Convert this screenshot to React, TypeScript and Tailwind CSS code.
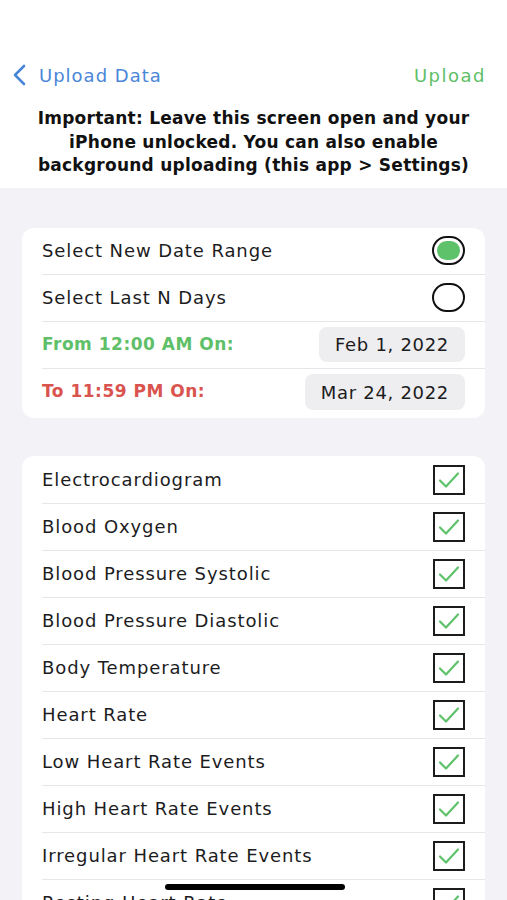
const items = [
  "Electrocardiogram",
  "Blood Oxygen",
  "Blood Pressure Systolic",
  "Blood Pressure Diastolic",
  "Body Temperature",
  "Heart Rate",
  "Low Heart Rate Events",
  "High Heart Rate Events",
  "Irregular Heart Rate Events",
  "Resting Heart Rate",
];

const Check = () => (
  <div className="w-[32px] h-[30px] border-2 border-[#1c1c1c] flex items-center justify-center">
    <svg width="24" height="20" viewBox="0 0 24 20" fill="none">
      <path d="M3 10.5 L9 16.5 L21 3.5" stroke="#5ec26a" strokeWidth="2.2" strokeLinecap="round" strokeLinejoin="round" />
    </svg>
  </div>
);

const Row = ({ children, last }: { children: React.ReactNode; last?: boolean }) => (
  <div className="pl-[20px]">
    <div className={"h-[47px] flex items-center justify-between pr-[20px] " + (last ? "" : "border-b border-[#e5e5ea]")}>
      {children}
    </div>
  </div>
);

export default function App() {
  return (
    <div
      className="relative w-[507px] h-[900px] overflow-hidden bg-[#f2f2f7] text-[#1c1c1e]"
      style={{ fontFamily: '"DejaVu Sans", "Liberation Sans", sans-serif' }}
    >
      <div className="bg-white pt-[60px] pb-[10px]">
        <div className="flex items-center justify-between px-[12px] h-[30px]">
          <div className="flex items-center gap-[11px] text-[#4a86d8]">
            <svg width="16" height="22" viewBox="0 0 16 22" fill="none">
              <path d="M12 2 L3 11 L12 20" stroke="#4a86d8" strokeWidth="2.6" strokeLinecap="round" strokeLinejoin="round" />
            </svg>
            <span className="text-[18px] tracking-[1px]">Upload Data</span>
          </div>
          <span className="text-[18px] text-[#5fbf68] pr-[9px] tracking-[1.5px]">Upload</span>
        </div>
        <p className="mt-[17px] text-center text-[17px] leading-[23.5px] font-bold text-[#111] tracking-[0.25px] whitespace-nowrap">
          Important: Leave this screen open and your
          <br />
          iPhone unlocked. You can also enable
          <br />
          background uploading (this app &gt; Settings)
        </p>
      </div>

      <div className="px-[22px] pt-[40px]">
        <div className="bg-white rounded-[12px] pb-[2px]">
          <Row>
            <span className="text-[18px] tracking-[0.9px]">Select New Date Range</span>
            <div className="w-[33px] h-[29px] rounded-full border-2 border-[#111] flex items-center justify-center">
              <div className="w-[23px] h-[19px] rounded-full bg-[#5ec26a]" />
            </div>
          </Row>
          <Row>
            <span className="text-[18px] tracking-[0.9px]">Select Last N Days</span>
            <div className="w-[33px] h-[29px] rounded-full border-2 border-[#111]" />
          </Row>
          <Row>
            <span className="text-[17px] font-bold text-[#5fbf68] tracking-[0.5px]">From 12:00 AM On:</span>
            <div className="h-[35px] px-[16px] rounded-[8px] bg-[#eeeef0] flex items-center text-[18px] tracking-[0.7px]">Feb 1, 2022</div>
          </Row>
          <Row last>
            <span className="text-[17px] font-bold text-[#d9534f] tracking-[0.5px]">To 11:59 PM On:</span>
            <div className="h-[36px] px-[16px] rounded-[8px] bg-[#eeeef0] flex items-center text-[18px] tracking-[0.7px]">Mar 24, 2022</div>
          </Row>
        </div>

        <div className="bg-white rounded-[12px] mt-[38px] pt-[1px]">
          {items.map((label) => (
            <Row key={label}>
              <span className="text-[18px] tracking-[0.9px]">{label}</span>
              <Check />
            </Row>
          ))}
        </div>
      </div>

      <div className="absolute left-[165px] top-[884px] w-[180px] h-[6px] rounded-full bg-black" />
    </div>
  );
}
